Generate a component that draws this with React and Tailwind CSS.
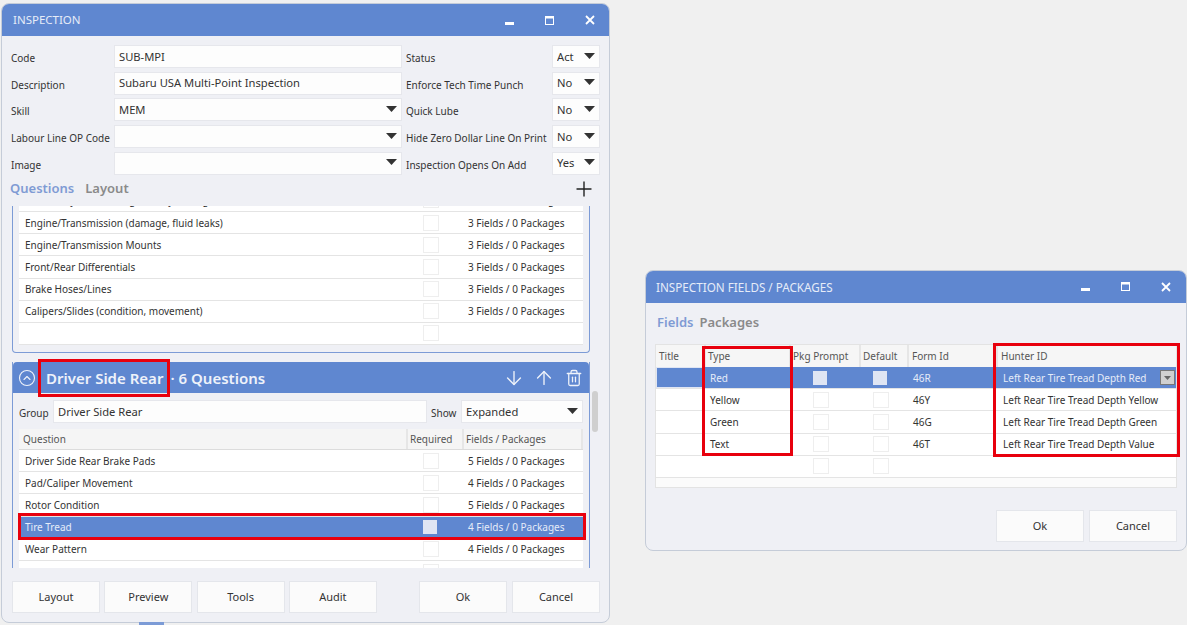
import { ArrowDown, ArrowUp, CircleChevronUp, Plus, Trash2 } from "lucide-react";

const upperRows = [
  "Exhaust System (leakage or any damage)",
  "Engine/Transmission (damage, fluid leaks)",
  "Engine/Transmission Mounts",
  "Front/Rear Differentials",
  "Brake Hoses/Lines",
  "Calipers/Slides (condition, movement)",
];

const lowerRows = [
  ["Driver Side Rear Brake Pads", "5 Fields / 0 Packages"],
  ["Pad/Caliper Movement", "4 Fields / 0 Packages"],
  ["Rotor Condition", "5 Fields / 0 Packages"],
  ["Tire Tread", "4 Fields / 0 Packages"],
  ["Wear Pattern", "4 Fields / 0 Packages"],
  ["", ""],
];

const fieldRows = [
  ["Red", "46R", "Left Rear Tire Tread Depth Red"],
  ["Yellow", "46Y", "Left Rear Tire Tread Depth Yellow"],
  ["Green", "46G", "Left Rear Tire Tread Depth Green"],
  ["Text", "46T", "Left Rear Tire Tread Depth Value"],
  ["", "", ""],
];

function Caret() {
  return (
    <svg width="11" height="6" viewBox="0 0 11 6" className="mb-[2px] shrink-0">
      <polygon points="0,0 11,0 5.5,6" fill="#333" />
    </svg>
  );
}

function WindowButtons({ gap }) {
  return (
    <div className={`flex items-center ${gap}`}>
      <svg width="9" height="9" viewBox="0 0 9 9">
        <rect x="0" y="6" width="9" height="3" fill="#fff" />
      </svg>
      <svg width="9" height="9" viewBox="0 0 9 9">
        <rect x="0.5" y="0.5" width="8" height="8" fill="none" stroke="#fff" />
        <rect x="0" y="0" width="9" height="2.5" fill="#fff" />
      </svg>
      <svg width="10" height="10" viewBox="0 0 10 10">
        <path d="M1 1 9 9M9 1 1 9" stroke="#fff" strokeWidth="1.8" />
      </svg>
    </div>
  );
}

function Field({ value, select, clip }) {
  return (
    <div className="flex h-[23px] items-center justify-between border border-[#e6e7ec] bg-[#fdfdfd] pl-[4px] pr-[4px] text-[11.2px] text-[#333]">
      <span className={clip ? "w-[20px] overflow-hidden whitespace-nowrap py-[2px]" : "whitespace-nowrap py-[2px]"}>{value}</span>
      {select && <Caret />}
    </div>
  );
}

function Check({ selected }) {
  return selected ? (
    <div className="h-[14px] w-[14px] bg-[#dfe5f3]" />
  ) : (
    <div className="h-[16px] w-[16px] border border-[#eeeeee] bg-white" />
  );
}

function QuestionRow({ name, count, selected, noCount }) {
  return (
    <div
      className={`flex h-[22.2px] items-center border-b border-[#e4e4e4] ${
        selected ? "bg-[#5f87d0] text-[#e6ecf8]" : "bg-white text-[#333]"
      }`}
    >
      <div className="w-[387px] pl-[6px]">{name}</div>
      <div className="flex w-[56px] justify-start pl-[17px]">
        <Check selected={selected} />
      </div>
      {!noCount && <div className="pl-[6px]">{count}</div>}
    </div>
  );
}

function Btn({ label }) {
  return (
    <div className="flex h-[32px] w-[88px] items-center justify-center border border-[#e4e6eb] bg-[#fbfbfb] text-[11px] text-[#333]">
      {label}
    </div>
  );
}

function InspectionWindow() {
  const left = [
    ["Code", "SUB-MPI", false],
    ["Description", "Subaru USA Multi-Point Inspection", false],
    ["Skill", "MEM", true],
    ["Labour Line OP Code", "", true],
    ["Image", "", true],
  ];
  const right = [
    ["Status", "Act"],
    ["Enforce Tech Time Punch", "No"],
    ["Quick Lube", "No"],
    ["Hide Zero Dollar Line On Print", "No"],
    ["Inspection Opens On Add", "Yes"],
  ];

  return (
    <div className="absolute left-[1px] top-[3px] flex h-[620px] w-[609px] flex-col overflow-hidden rounded-[8px] border border-[#c5ccd8] bg-[#eff0f5]">
      <div className="flex h-[32px] shrink-0 items-center justify-between bg-[#5f87d0] pl-[11px] pr-[14px] text-[11.5px] text-[#e6ecf8]">
        <span>INSPECTION</span>
        <WindowButtons gap="gap-[31px]" />
      </div>

      <div className="flex gap-[4px] pl-[9px] pt-[9px]">
        <div className="flex w-[391px] flex-col gap-[3.7px]">
          {left.map(([label, value, select]) => (
            <div key={label} className="flex items-center">
              <div className="w-[103px] whitespace-nowrap pt-[3px] text-[#333]">{label}</div>
              <div className="flex-1">
                <Field value={value} select={select} />
              </div>
            </div>
          ))}
        </div>
        <div className="flex w-[194px] flex-col gap-[3.7px]">
          {right.map(([label, value]) => (
            <div key={label} className="flex items-center">
              <div className="w-[146px] whitespace-nowrap pt-[3px] text-[#333]">{label}</div>
              <div className="w-[48px]">
                <Field value={value} select clip />
              </div>
            </div>
          ))}
        </div>
      </div>

      <div className="flex h-[31px] shrink-0 items-center justify-between pl-[8px] pr-[13px] text-[13px] font-semibold">
        <div className="mb-[4px] flex gap-[11px]">
          <span className="text-[#7f9bd4]">Questions</span>
          <span className="text-[#8a8a8a]">Layout</span>
        </div>
        <Plus size={24} strokeWidth={1.4} color="#222" className="mb-[2px]" />
      </div>

      <div className="relative ml-[10px] h-[362px] w-[586px] shrink-0 overflow-hidden">
        <div className="-mt-[16px] w-[578px] rounded-b-[4px] border-x border-b border-[#7c9bd6] px-[6px] pb-[7px]">
          {upperRows.map((name) => (
            <QuestionRow key={name} name={name} count="3 Fields / 0 Packages" />
          ))}
          <QuestionRow name="" noCount />
        </div>

        <div className="mt-[9px] w-[578px] border-x border-[#7c9bd6]">
          <div className="flex h-[31px] items-center justify-between rounded-t-[4px] bg-[#5f87d0] pl-[5px] text-white">
            <div className="flex items-center">
              <CircleChevronUp size={18} strokeWidth={1.5} color="#eef2fa" />
              <div className="ml-[10px] flex text-[15px] font-semibold text-[#eef2fa]">
                <span>Driver Side Rear</span>
                <span className="ml-[7px]">·</span>
                <span className="ml-[4px]">6 Questions</span>
              </div>
            </div>
            <div className="flex items-center">
              <div className="flex w-[30px] justify-center">
                <ArrowDown size={22} strokeWidth={1.5} color="#eef2fa" />
              </div>
              <div className="flex w-[30px] justify-center">
                <ArrowUp size={22} strokeWidth={1.5} color="#eef2fa" />
              </div>
              <div className="flex w-[30px] justify-center">
                <Trash2 size={18} strokeWidth={1.7} color="#eef2fa" />
              </div>
            </div>
          </div>

          <div className="px-[6px]">
            <div className="flex items-center pt-[7px]">
              <div className="w-[34px] pt-[3px] text-[#333]">Group</div>
              <div className="w-[374px]">
                <Field value="Driver Side Rear" />
              </div>
              <div className="w-[34px] pl-[4px] pt-[3px] text-[#333]">Show</div>
              <div className="w-[122px]">
                <Field value="Expanded" select />
              </div>
            </div>

            <div className="mt-[6px] flex h-[21px] items-center border-b border-[#dcdcdc] bg-[#f5f5f5] text-[#555]">
              <div className="w-[387px] pl-[4px]">Question</div>
              <div className="flex h-full w-[56px] items-center border-l-2 border-[#e6e6e6] pl-[2px]">Required</div>
              <div className="flex h-full flex-1 items-center border-x-2 border-[#e6e6e6] pl-[2px]">Fields / Packages</div>
            </div>

            {lowerRows.map(([name, count]) => (
              <QuestionRow key={name || "blank"} name={name} count={count} selected={name === "Tire Tread"} />
            ))}
          </div>
        </div>

        <div className="absolute left-[580px] top-[185px] h-[41px] w-[6px] rounded-full bg-[#cfcfcf]" />
      </div>

      <div className="flex items-start justify-between pl-[10px] pr-[9px] pt-[13px]">
        <div className="flex gap-[4.3px]">
          <Btn label="Layout" />
          <Btn label="Preview" />
          <Btn label="Tools" />
          <Btn label="Audit" />
        </div>
        <div className="flex gap-[5px]">
          <Btn label="Ok" />
          <Btn label="Cancel" />
        </div>
      </div>
    </div>
  );
}

function FieldsWindow() {
  return (
    <div className="absolute left-[645px] top-[270px] flex h-[281px] w-[542px] flex-col overflow-hidden rounded-[8px] border border-[#c5ccd8] bg-[#eff0f5]">
      <div className="flex h-[32px] shrink-0 items-center justify-between bg-[#5f87d0] pb-[1px] pl-[10px] pr-[15px] text-[11.7px] text-[#e6ecf8]">
        <span>INSPECTION FIELDS / PACKAGES</span>
        <WindowButtons gap="gap-[31px]" />
      </div>

      <div className="flex gap-[6px] pl-[11px] pt-[12px] text-[13px] font-semibold">
        <span className="text-[#7f9bd4]">Fields</span>
        <span className="text-[#8a8a8a]">Packages</span>
      </div>

      <div className="ml-[9px] mt-[15px] w-[522px] border border-[#e3e3e3] bg-white">
        <div className="flex h-[22px] items-center bg-[#f6f6f6] text-[#555]">
          <div className="flex h-full w-[48px] items-center pl-[3px]">Title</div>
          <div className="flex h-full w-[85px] items-center border-l-2 border-[#e6e6e6] pl-[2px]">Type</div>
          <div className="flex h-full w-[70px] items-center border-l-2 border-[#e6e6e6] pl-[2px]">Pkg Prompt</div>
          <div className="flex h-full w-[48px] items-center border-l-2 border-[#e6e6e6] pl-[2px]">Default</div>
          <div className="flex h-full w-[89px] items-center border-l-2 border-[#e6e6e6] pl-[3px]">Form Id</div>
          <div className="flex h-full flex-1 items-center border-l-2 border-[#e6e6e6] pl-[3px]">Hunter ID</div>
        </div>
        {fieldRows.map(([type, form, hunter], i) => (
          <div
            key={i}
            className={`flex h-[22.2px] items-center border-b border-[#e4e4e4] ${
              i === 0 ? "bg-[#5f87d0] text-[#e6ecf8]" : "bg-white text-[#333]"
            }`}
          >
            <div className={`h-full w-[48px] ${i === 0 ? "border border-[#dfe5f3]" : ""}`} />
            <div className="w-[85px] pl-[6px]">{type}</div>
            <div className="flex w-[70px] pl-[24px]">
              <Check selected={i === 0} />
            </div>
            <div className="flex w-[48px] pl-[14px]">
              <Check selected={i === 0} />
            </div>
            <div className="w-[89px] pl-[6px]">{form}</div>
            <div className="flex flex-1 items-center justify-between pl-[7px] pr-[1px]">
              <span>{hunter}</span>
              {i === 0 && (
                <div className="flex h-[15px] w-[15px] items-center justify-center border border-[#777] bg-[#d0d0d0]">
                  <svg width="7" height="4" viewBox="0 0 7 4">
                    <polygon points="0,0 7,0 3.5,4" fill="#666" />
                  </svg>
                </div>
              )}
            </div>
          </div>
        ))}
        <div className="h-[9px] bg-[#fbfbfb]" />
      </div>

      <div className="mt-[22px] flex justify-end gap-[5px] pr-[9px]">
        <Btn label="Ok" />
        <Btn label="Cancel" />
      </div>
    </div>
  );
}

export default function App() {
  return (
    <div
      className="relative h-[625px] w-[1187px] overflow-hidden bg-[#f0f0f0] text-[10px] leading-[14px]"
      style={{ fontFamily: '"Noto Sans", "Open Sans", sans-serif' }}
    >
      <InspectionWindow />
      <FieldsWindow />

      {/* sliver of the tab bar behind the window */}
      <div className="absolute left-[139px] top-[622px] h-[3px] w-[25px] bg-[#7c9bd6]" />

      {/* red call-outs drawn on top of the screenshot */}
      <div className="absolute left-[38px] top-[359px] h-[38px] w-[132px] border-[3px] border-[#e8000d]" />
      <div className="absolute left-[18px] top-[513px] h-[27px] w-[568px] border-[3px] border-[#e8000d]" />
      <div className="absolute left-[702px] top-[346px] h-[110px] w-[91px] border-[3px] border-[#e8000d]" />
      <div className="absolute left-[993px] top-[343px] h-[114px] w-[187px] border-[3px] border-[#e8000d]" />
    </div>
  );
}
